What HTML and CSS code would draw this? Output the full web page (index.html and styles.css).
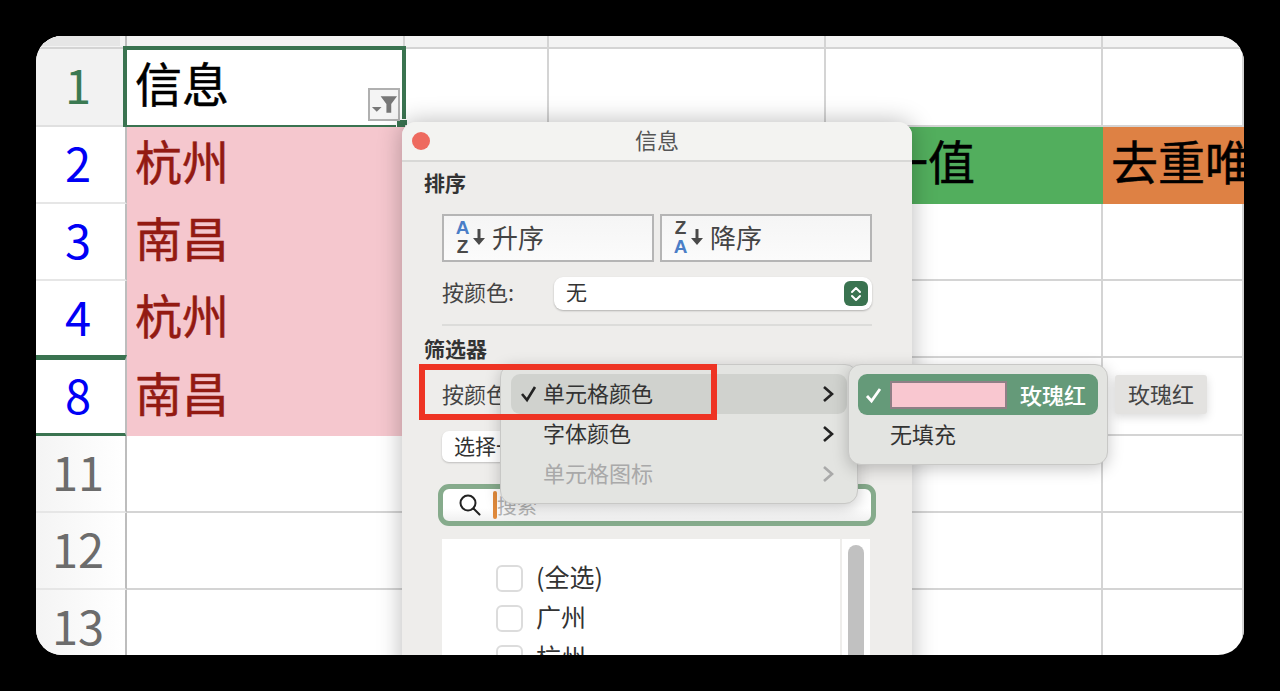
FILE: index.html
```html
<!DOCTYPE html>
<html lang="zh-CN">
<head>
    <meta charset="UTF-8">
    <title>筛选器</title>
    <link rel="stylesheet" href="styles.css">
</head>
<body>
    <div class="sheet">
        <!-- Spreadsheet grid -->
        <div class="row row-top">
            <div class="head corner"><span class="corner-bar"></span></div><div class="cell"></div><div class="cell"></div><div class="cell"></div><div class="cell"></div><div class="cell"></div>
        </div>
        <div class="row row-a">
            <div class="head head-on num-green">1</div>
            <div class="cell text-big">信息
                <div class="selection"><span class="handle"></span></div>
                <div class="filter-btn">
                    <svg width="29" height="29" viewBox="0 0 29 29"><path d="M2 17h10l-5 5z" fill="#777"/><path d="M11 6h17l-6 8v9h-5v-9z" fill="#777"/></svg>
                </div>
            </div>
            <div class="cell"></div><div class="cell"></div><div class="cell"></div><div class="cell"></div>
        </div>
        <div class="row">
            <div class="head num-blue">2</div>
            <div class="cell text-big pink">杭州</div>
            <div class="cell"></div><div class="cell"></div>
            <div class="cell text-big green">唯一值</div>
            <div class="cell text-big orange">去重唯一值</div>
        </div>
        <div class="row">
            <div class="head num-blue">3</div>
            <div class="cell text-big pink">南昌</div>
            <div class="cell"></div><div class="cell"></div><div class="cell"></div><div class="cell"></div>
        </div>
        <div class="row">
            <div class="head num-blue">4</div>
            <div class="cell text-big pink">杭州</div>
            <div class="cell"></div><div class="cell"></div><div class="cell"></div><div class="cell"></div>
        </div>
        <div class="row row-a">
            <div class="head num-blue head-bars">8</div>
            <div class="cell text-big pink">南昌</div>
            <div class="cell"></div><div class="cell"></div><div class="cell"></div><div class="cell"></div>
        </div>
        <div class="row">
            <div class="head">11</div><div class="cell"></div><div class="cell"></div><div class="cell"></div><div class="cell"></div><div class="cell"></div>
        </div>
        <div class="row">
            <div class="head">12</div><div class="cell"></div><div class="cell"></div><div class="cell"></div><div class="cell"></div><div class="cell"></div>
        </div>
        <div class="row">
            <div class="head">13</div><div class="cell"></div><div class="cell"></div><div class="cell"></div><div class="cell"></div><div class="cell"></div>
        </div>

        <!-- Filter dialog -->
        <div class="dialog">
            <div class="title-bar">
                <span class="close"></span>
                信息
            </div>
            <div class="dialog-body">
                <h4 class="section">排序</h4>
                <div class="sort-btns">
                    <div class="sort-btn">
                        <span class="az"><b class="blue">A</b><b>Z</b></span>
                        <svg class="arrow" width="12" height="18" viewBox="0 0 12 18"><path d="M4.500 1h3v9H12l-6 7-6-7h4.500z" fill="#4a4a4a"/></svg>
                        升序
                    </div>
                    <div class="sort-btn">
                        <span class="az"><b>Z</b><b class="blue">A</b></span>
                        <svg class="arrow" width="12" height="18" viewBox="0 0 12 18"><path d="M4.500 1h3v9H12l-6 7-6-7h4.500z" fill="#4a4a4a"/></svg>
                        降序
                    </div>
                </div>
                <div class="color-row">
                    <span class="label">按颜色:</span>
                    <div class="select">
                        无
                        <span class="stepper">
                            <svg width="14" height="20" viewBox="0 0 14 20"><path d="M3 8l4-4 4 4M3 12l4 4 4-4" fill="none" stroke="#fff" stroke-width="2" stroke-linecap="round" stroke-linejoin="round"/></svg>
                        </span>
                    </div>
                </div>
                <div class="divider"></div>
                <h4 class="section section-filter">筛选器</h4>
                <div class="label label-filter">按颜色:</div>
                <div class="choose">选择一项</div>
                <div class="search">
                    <svg width="24" height="24" viewBox="0 0 24 24"><circle cx="10" cy="10" r="7.500" fill="none" stroke="#222" stroke-width="2"/><path d="M15.500 15.500l6 6" stroke="#222" stroke-width="2" stroke-linecap="round"/></svg>
                    <span class="caret"></span>
                    <span class="placeholder">搜索</span>
                </div>
                <div class="list">
                    <div class="list-items">
                        <div class="list-item"><span class="check"></span>(全选)</div>
                        <div class="list-item"><span class="check"></span>广州</div>
                        <div class="list-item"><span class="check"></span>杭州</div>
                    </div>
                    <div class="scroll"><span class="thumb"></span></div>
                </div>
            </div>
        </div>

        <!-- Popup menus -->
        <div class="menu menu-main">
            <div class="menu-item active">
                <svg class="tick" width="18" height="18" viewBox="0 0 18 18"><path d="M2 9l5 6 8-13" fill="none" stroke="#222" stroke-width="2.600"/></svg>
                单元格颜色
                <svg class="chev" width="12" height="18" viewBox="0 0 12 18"><path d="M2 2l8 7-8 7" fill="none" stroke="#222" stroke-width="2.600"/></svg>
            </div>
            <div class="menu-item">
                字体颜色
                <svg class="chev" width="12" height="18" viewBox="0 0 12 18"><path d="M2 2l8 7-8 7" fill="none" stroke="#222" stroke-width="2.600"/></svg>
            </div>
            <div class="menu-item disabled">
                单元格图标
                <svg class="chev" width="12" height="18" viewBox="0 0 12 18"><path d="M2 2l8 7-8 7" fill="none" stroke="#a9a9a9" stroke-width="2.600"/></svg>
            </div>
        </div>

        <div class="menu menu-sub">
            <div class="sub-item selected">
                <svg class="tick-white" width="18" height="18" viewBox="0 0 18 18"><path d="M2 10l4.500 5L15 3" fill="none" stroke="#fff" stroke-width="2.800"/></svg>
                <span class="swatch"></span>
                玫瑰红
            </div>
            <div class="sub-item plain">无填充</div>
        </div>

        <div class="tip">玫瑰红</div>

        <!-- Red highlight around the colour row -->
        <div class="red-box"></div>
    </div>
</body>
</html>
```

FILE: styles.css
```css
* {
    margin: 0;
    padding: 0;
    box-sizing: border-box;
    font-family: "Noto Sans CJK SC", "Noto Sans", sans-serif;
}

body {
    background-color: #000;
    padding: 36px;
    height: 691px;
    overflow: hidden;
}

/* Sheet */
.sheet {
    position: relative;
    width: 1208px;
    height: 619px;
    background: #fff;
    border-radius: 26px;
    overflow: hidden;
}

.row {
    display: grid;
    grid-template-columns: 91px 278px 144px 277px 277px 141px;
    height: 77px;
}

.row-top {
    height: 13px;
    background: #f3f3f3;
}

.row-a {
    height: 78px;
}

.cell {
    position: relative;
    display: flex;
    align-items: center;
    border-right: 2px solid #d4d4d4;
    border-bottom: 2px solid #d4d4d4;
    white-space: nowrap;
    overflow: visible;
}

.head {
    display: flex;
    align-items: center;
    justify-content: center;
    position: relative;
    font-size: 47px;
    line-height: 1;
    color: #6c6c6c;
    background: linear-gradient(90deg, #f4f4f4, #fff);
    border-right: 2px solid #bdbdbd;
    border-bottom: 2px solid #e6e6e6;
    padding: 0 5px 7px 0;
}

.head-on {
    background: #f2f2f2;
    border-bottom-color: #e0e0e0;
}

.corner {
    background: #f3f3f3;
    padding: 0;
    align-items: flex-start;
    justify-content: flex-start;
    border-bottom-color: #d4d4d4;
}

.corner-bar {
    width: 84px;
    height: 10px;
    background: #e6e6e6;
}

.num-green {
    color: #3b7a52;
}

.num-blue {
    color: #0000f5;
    background: #fff;
}

.head-bars {
    border-top: 5px solid #3a7350;
    border-bottom: 5px solid #3a7350;
    margin-top: -3px;
    margin-bottom: -2px;
}

.text-big {
    font-size: 47px;
    -webkit-text-stroke: 0.5px currentColor;
    line-height: 1;
    padding: 0 0 12px 8px;
    color: #000;
}

.pink {
    background: #f5c7ce;
    color: #931a12;
    border-right: none;
    border-bottom: none;
}

.green {
    background: #52ae5d;
    border: none;
}

.orange {
    background: #de8144;
    border: none;
    overflow: hidden;
}

.selection {
    position: absolute;
    left: -4px;
    top: -3px;
    width: 283px;
    height: 83px;
    border: 4px solid #3a7350;
    -webkit-text-stroke: 0;
}

.handle {
    position: absolute;
    right: -6px;
    bottom: -6px;
    width: 12px;
    height: 12px;
    background: #3a7350;
    border: 1px solid #fff;
}

.filter-btn {
    position: absolute;
    right: 3px;
    bottom: 4px;
    width: 32px;
    height: 33px;
    background: #f4f4f4;
    border: 2px solid #b0b0b0;
    display: flex;
    align-items: center;
    justify-content: center;
}

/* Dialog */
.dialog {
    position: absolute;
    left: 366px;
    top: 86px;
    width: 510px;
    height: 570px;
    background: #eeedeb;
    border-radius: 14px;
    box-shadow: 0 0 24px rgba(0,0,0,0.28);
}

.title-bar {
    position: relative;
    height: 40px;
    background: #f3f3f1;
    border-bottom: 2px solid #d8d8d6;
    border-radius: 14px 14px 0 0;
    text-align: center;
    font-size: 22px;
    line-height: 34px;
    color: #555;
}

.close {
    position: absolute;
    left: 10px;
    top: 10px;
    width: 18px;
    height: 18px;
    border-radius: 50%;
    background: #ee6a5f;
}

.dialog-body {
    padding: 5px 40px 0;
}

.section {
    margin-left: -18px;
    font-size: 21px;
    line-height: 30px;
    font-weight: 700;
    color: #333;
}

.sort-btns {
    display: flex;
    gap: 6px;
    margin-top: 17px;
}

.sort-btn {
    display: flex;
    align-items: center;
    width: 212px;
    height: 48px;
    padding: 0 0 3px 10px;
    background: linear-gradient(#f5f5f5, #fbfbfb);
    border: 2px solid #b5b5b5;
    font-size: 26px;
    color: #444;
}

.az {
    display: flex;
    flex-direction: column;
    width: 17px;
    margin-right: 2px;
    font-size: 19px;
    line-height: 19px;
    color: #4a4a4a;
}

.az b {
    font-family: "Liberation Sans", sans-serif;
    text-align: center;
}

.az .blue {
    color: #4a7ec7;
}

.arrow {
    margin-right: 7px;
}

.color-row {
    display: flex;
    align-items: center;
    margin-top: 15px;
}

.label {
    font-size: 22px;
    line-height: 29px;
    color: #444;
}

.color-row .label {
    width: 112px;
    margin-bottom: 4px;
}

.select {
    position: relative;
    width: 318px;
    height: 33px;
    padding-left: 12px;
    background: #fff;
    border-radius: 9px;
    box-shadow: 0 1px 2px rgba(0,0,0,0.25);
    font-size: 21px;
    line-height: 29px;
    color: #333;
}

.stepper {
    position: absolute;
    right: 4px;
    top: 4px;
    width: 24px;
    height: 25px;
    display: flex;
    align-items: center;
    justify-content: center;
    background: #3a7350;
    border-radius: 6px;
}

.divider {
    height: 2px;
    margin-top: 14px;
    background: #dcdcda;
}

.section-filter {
    margin-top: 7px;
}

.label-filter {
    margin-top: 16px;
}

.choose {
    width: 150px;
    height: 31px;
    margin-top: 23px;
    padding-left: 12px;
    background: #fff;
    border-radius: 7px;
    box-shadow: 0 1px 2px rgba(0,0,0,0.2);
    font-size: 21px;
    line-height: 29px;
    color: #333;
}

.search {
    display: flex;
    align-items: center;
    width: 438px;
    height: 42px;
    margin: 22px 0 0 -4px;
    padding-left: 15px;
    background: linear-gradient(#fff, #fff 60%, #f0f0f0);
    border: 5px solid #86ab8c;
    border-radius: 11px;
}

.caret {
    width: 4px;
    height: 28px;
    margin-left: 11px;
    background: #e08a3c;
    border-radius: 2px;
}

.placeholder {
    font-size: 20px;
    color: #b5b5b5;
}

.list {
    display: flex;
    width: 428px;
    height: 130px;
    margin-top: 13px;
    background: #fff;
}

.list-items {
    width: 400px;
    padding: 26px 0 0 54px;
    border-right: 2px solid #eeedeb;
}

.list-item {
    display: flex;
    align-items: flex-start;
    height: 27px;
    margin-bottom: 13px;
    font-size: 25px;
    line-height: 23px;
    color: #333;
    white-space: nowrap;
}

.check {
    width: 27px;
    height: 27px;
    margin-right: 13px;
    background: #fff;
    border: 2px solid #dcdcdc;
    border-radius: 6px;
    flex-shrink: 0;
}

.scroll {
    width: 28px;
    padding: 6px 6px 0;
}

.thumb {
    display: block;
    width: 16px;
    height: 200px;
    background: #c1c1c1;
    border-radius: 8px;
}

.red-box {
    position: absolute;
    left: 383px;
    top: 328px;
    width: 298px;
    height: 56px;
    border: 6px solid #ee3424;
}

/* Menus */
.menu {
    position: absolute;
    background: #e3e4e1;
    border-radius: 13px;
    border: 1px solid #c8c8c6;
    box-shadow: 0 4px 16px rgba(0,0,0,0.22);
}

.menu-main {
    left: 464px;
    top: 328px;
    width: 358px;
    height: 140px;
    padding: 9px 10px;
}

.menu-item {
    position: relative;
    height: 40px;
    padding-left: 32px;
    font-size: 22px;
    line-height: 36px;
    color: #333;
    border-radius: 9px;
}

.menu-item.active {
    background: #d0d2ce;
}

.menu-item.disabled {
    color: #a9a9a9;
}

.tick {
    position: absolute;
    left: 9px;
    top: 11px;
}

.chev {
    position: absolute;
    right: 13px;
    top: 11px;
}

.menu-sub {
    left: 812px;
    top: 328px;
    width: 260px;
    height: 101px;
    padding: 9px 9px;
}

.sub-item {
    display: flex;
    align-items: center;
    height: 41px;
    font-size: 22px;
    color: #333;
}

.selected {
    padding: 0 0 2px 7px;
    background: #659a79;
    border-radius: 9px;
    color: #fff;
    font-weight: 500;
}

.tick-white {
    margin: 2px 7px 0 0;
}

.swatch {
    width: 117px;
    height: 28px;
    margin: 2px 13px 0 0;
    background: #f9c7d0;
    border: 2px solid #8f7f86;
}

.plain {
    padding: 0 0 5px 32px;
}

.tip {
    position: absolute;
    left: 1079px;
    top: 339px;
    width: 92px;
    height: 39px;
    background: #e3e2e0;
    border-radius: 3px;
    box-shadow: 0 3px 10px rgba(0,0,0,0.15);
    text-align: center;
    font-size: 22px;
    line-height: 37px;
    color: #444;
}
```
